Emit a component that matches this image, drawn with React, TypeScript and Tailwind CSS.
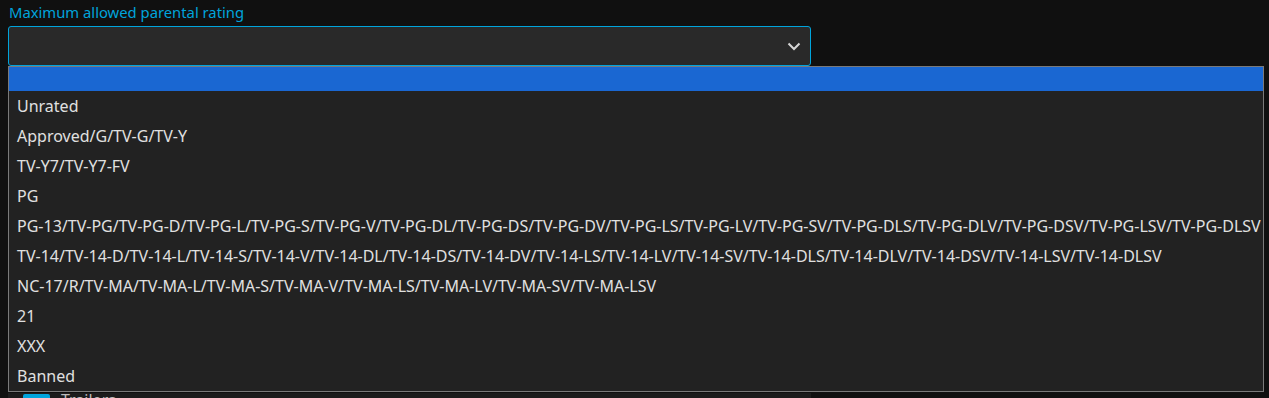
import React from "react";

const options = [
  "Unrated",
  "Approved/G/TV-G/TV-Y",
  "TV-Y7/TV-Y7-FV",
  "PG",
  "PG-13/TV-PG/TV-PG-D/TV-PG-L/TV-PG-S/TV-PG-V/TV-PG-DL/TV-PG-DS/TV-PG-DV/TV-PG-LS/TV-PG-LV/TV-PG-SV/TV-PG-DLS/TV-PG-DLV/TV-PG-DSV/TV-PG-LSV/TV-PG-DLSV",
  "TV-14/TV-14-D/TV-14-L/TV-14-S/TV-14-V/TV-14-DL/TV-14-DS/TV-14-DV/TV-14-LS/TV-14-LV/TV-14-SV/TV-14-DLS/TV-14-DLV/TV-14-DSV/TV-14-LSV/TV-14-DLSV",
  "NC-17/R/TV-MA/TV-MA-L/TV-MA-S/TV-MA-V/TV-MA-LS/TV-MA-LV/TV-MA-SV/TV-MA-LSV",
  "21",
  "XXX",
  "Banned",
];

export default function App() {
  return (
    <div
      className="relative w-[1269px] h-[398px] overflow-hidden bg-[#101010]"
      style={{ fontFamily: '"Noto Sans", sans-serif' }}
    >
      <div className="pl-2 pt-[2px] w-[811px]">
        <div className="text-[14.8px] leading-[20px] text-[#00a4dc] pl-px">
          Maximum allowed parental rating
        </div>
        <div className="mt-1 h-[40px] w-[803px] rounded-[3px] border border-[#00a4dc] bg-[#292929] flex items-center justify-end pr-[9px]">
          <svg width="14" height="9" viewBox="0 0 14 9" fill="none">
            <path d="M1.5 1.5 L7 7 L12.5 1.5" stroke="#d6d6d6" strokeWidth="2" />
          </svg>
        </div>
        <div className="mt-[327px] bg-[#1c1c1c] h-[40px] flex items-start pl-[15px] gap-[11px]">
          <div className="w-[27px] h-[27px] bg-[#00a4dc] rounded-[2px] mt-px" />
          <div className="text-[16px] text-[#bbbbbb] leading-[20px] -mt-[3px]">Trailers</div>
        </div>
      </div>
      <div className="absolute left-[8px] top-[66px] w-[1256px] border border-[#7a7a7a] bg-[#222222]">
        <div className="h-[24px] bg-[#1a67d2]" />
        {options.map((o) => (
          <div
            key={o}
            className="h-[30px] flex items-center pl-[8px] text-[16px] leading-[20px] text-[#e0e0e0] whitespace-nowrap"
          >
            {o}
          </div>
        ))}
      </div>
    </div>
  );
}
